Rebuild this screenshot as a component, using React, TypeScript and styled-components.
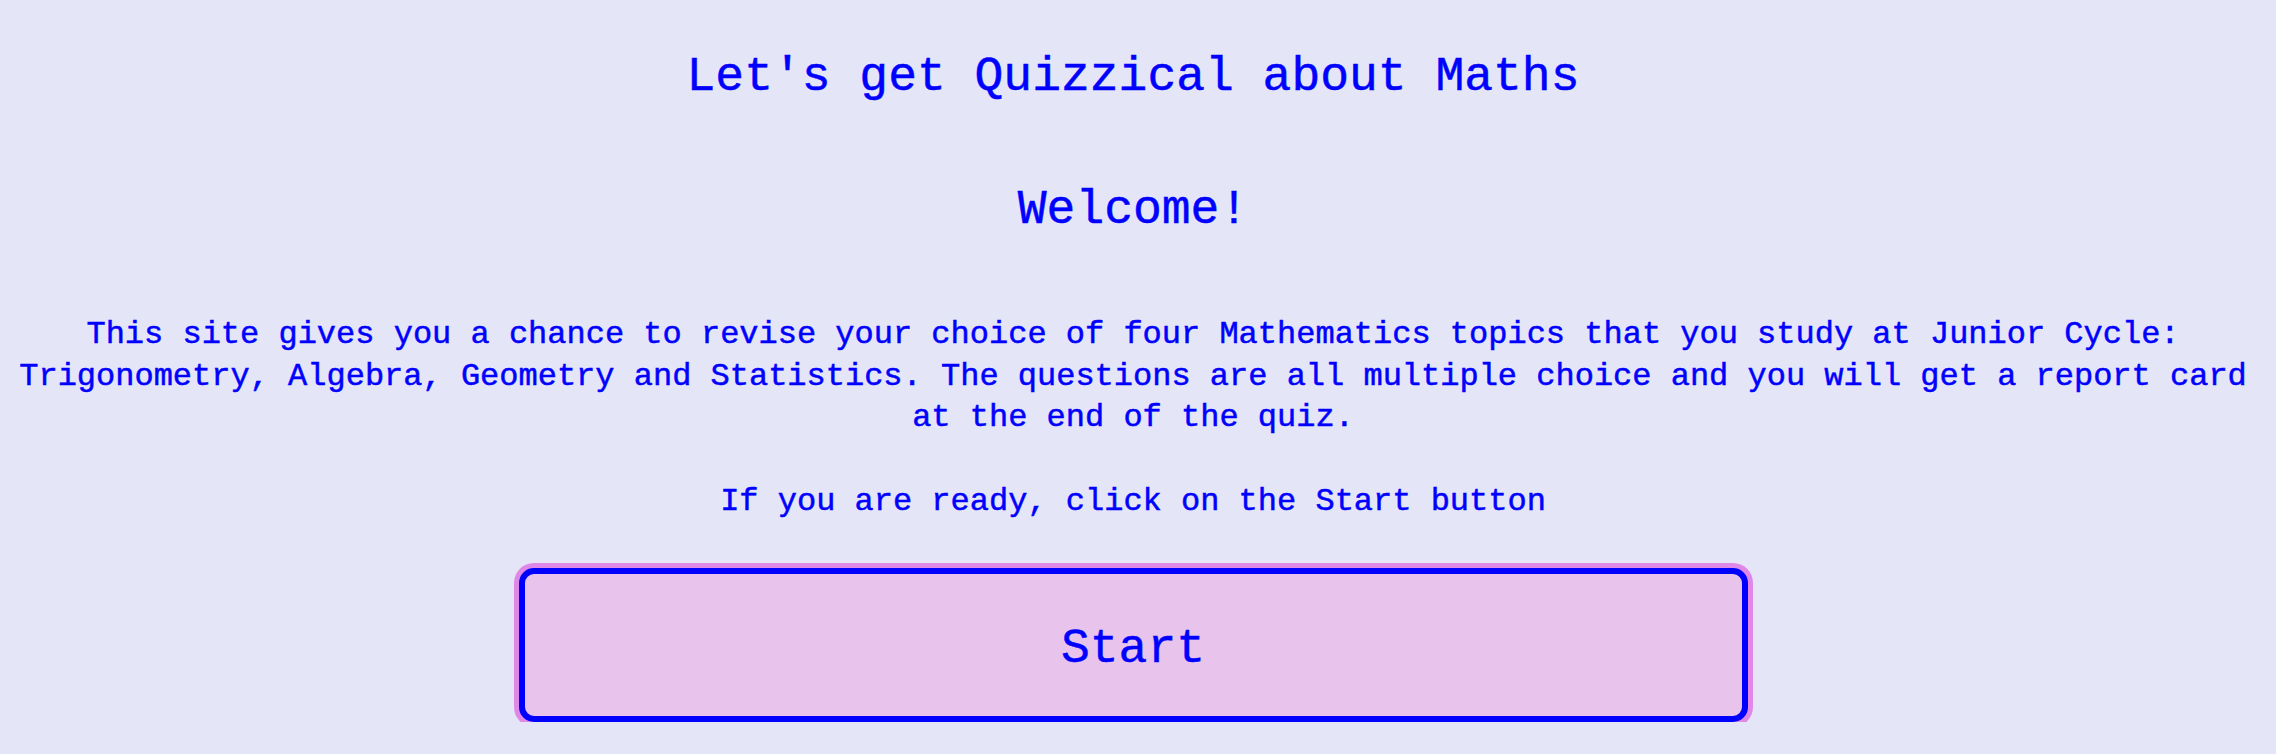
import React from "react";
import styled, { createGlobalStyle } from "styled-components";

const Global = createGlobalStyle`
  html, body {
    margin: 0;
    padding: 0;
    background: #e5e5f8;
  }
  body {
    font-family: "Liberation Mono", "DejaVu Sans Mono", monospace;
    color: #0000ff;
  }
`;

const Page = styled.main`
  display: flex;
  flex-direction: column;
  align-items: center;
  padding: 49px 18px 0 8px;
  text-align: center;
  -webkit-text-stroke: 0.5px #0000ff;
`;

const Title = styled.h1`
  margin: 0;
  font-size: 48px;
  line-height: 56px;
  font-weight: normal;
`;

const Subtitle = styled.h2`
  margin: 77px 0 0;
  font-size: 48px;
  line-height: 56px;
  font-weight: normal;
`;

const Text = styled.p<{ $gap: number }>`
  margin: ${(p) => p.$gap}px 0 0;
  font-size: 32px;
  line-height: 41.6px;
`;

const StartButton = styled.button`
  margin-top: 46px;
  width: 1229px;
  height: 154px;
  box-sizing: border-box;
  border: 6px solid #0000ff;
  border-radius: 15px;
  box-shadow: 0 0 0 5px #e088e8;
  background: #e8c4ec;
  color: #0000ff;
  font-family: "Liberation Mono", "DejaVu Sans Mono", monospace;
  font-size: 48px;
  padding: 8px 0 0;
  -webkit-text-stroke: 0.5px #0000ff;
  cursor: pointer;
`;

export default function App() {
  return (
    <>
      <Global />
      <Page>
        <Title>Let's get Quizzical about Maths</Title>
        <Subtitle>Welcome!</Subtitle>
        <Text $gap={76}>
          This site gives you a chance to revise your choice of four Mathematics topics that you study at Junior Cycle: Trigonometry, Algebra, Geometry and Statistics. The questions are all multiple choice and you will get a report card at the end of the quiz.
        </Text>
        <Text $gap={42}>If you are ready, click on the Start button</Text>
        <StartButton>Start</StartButton>
      </Page>
    </>
  );
}
